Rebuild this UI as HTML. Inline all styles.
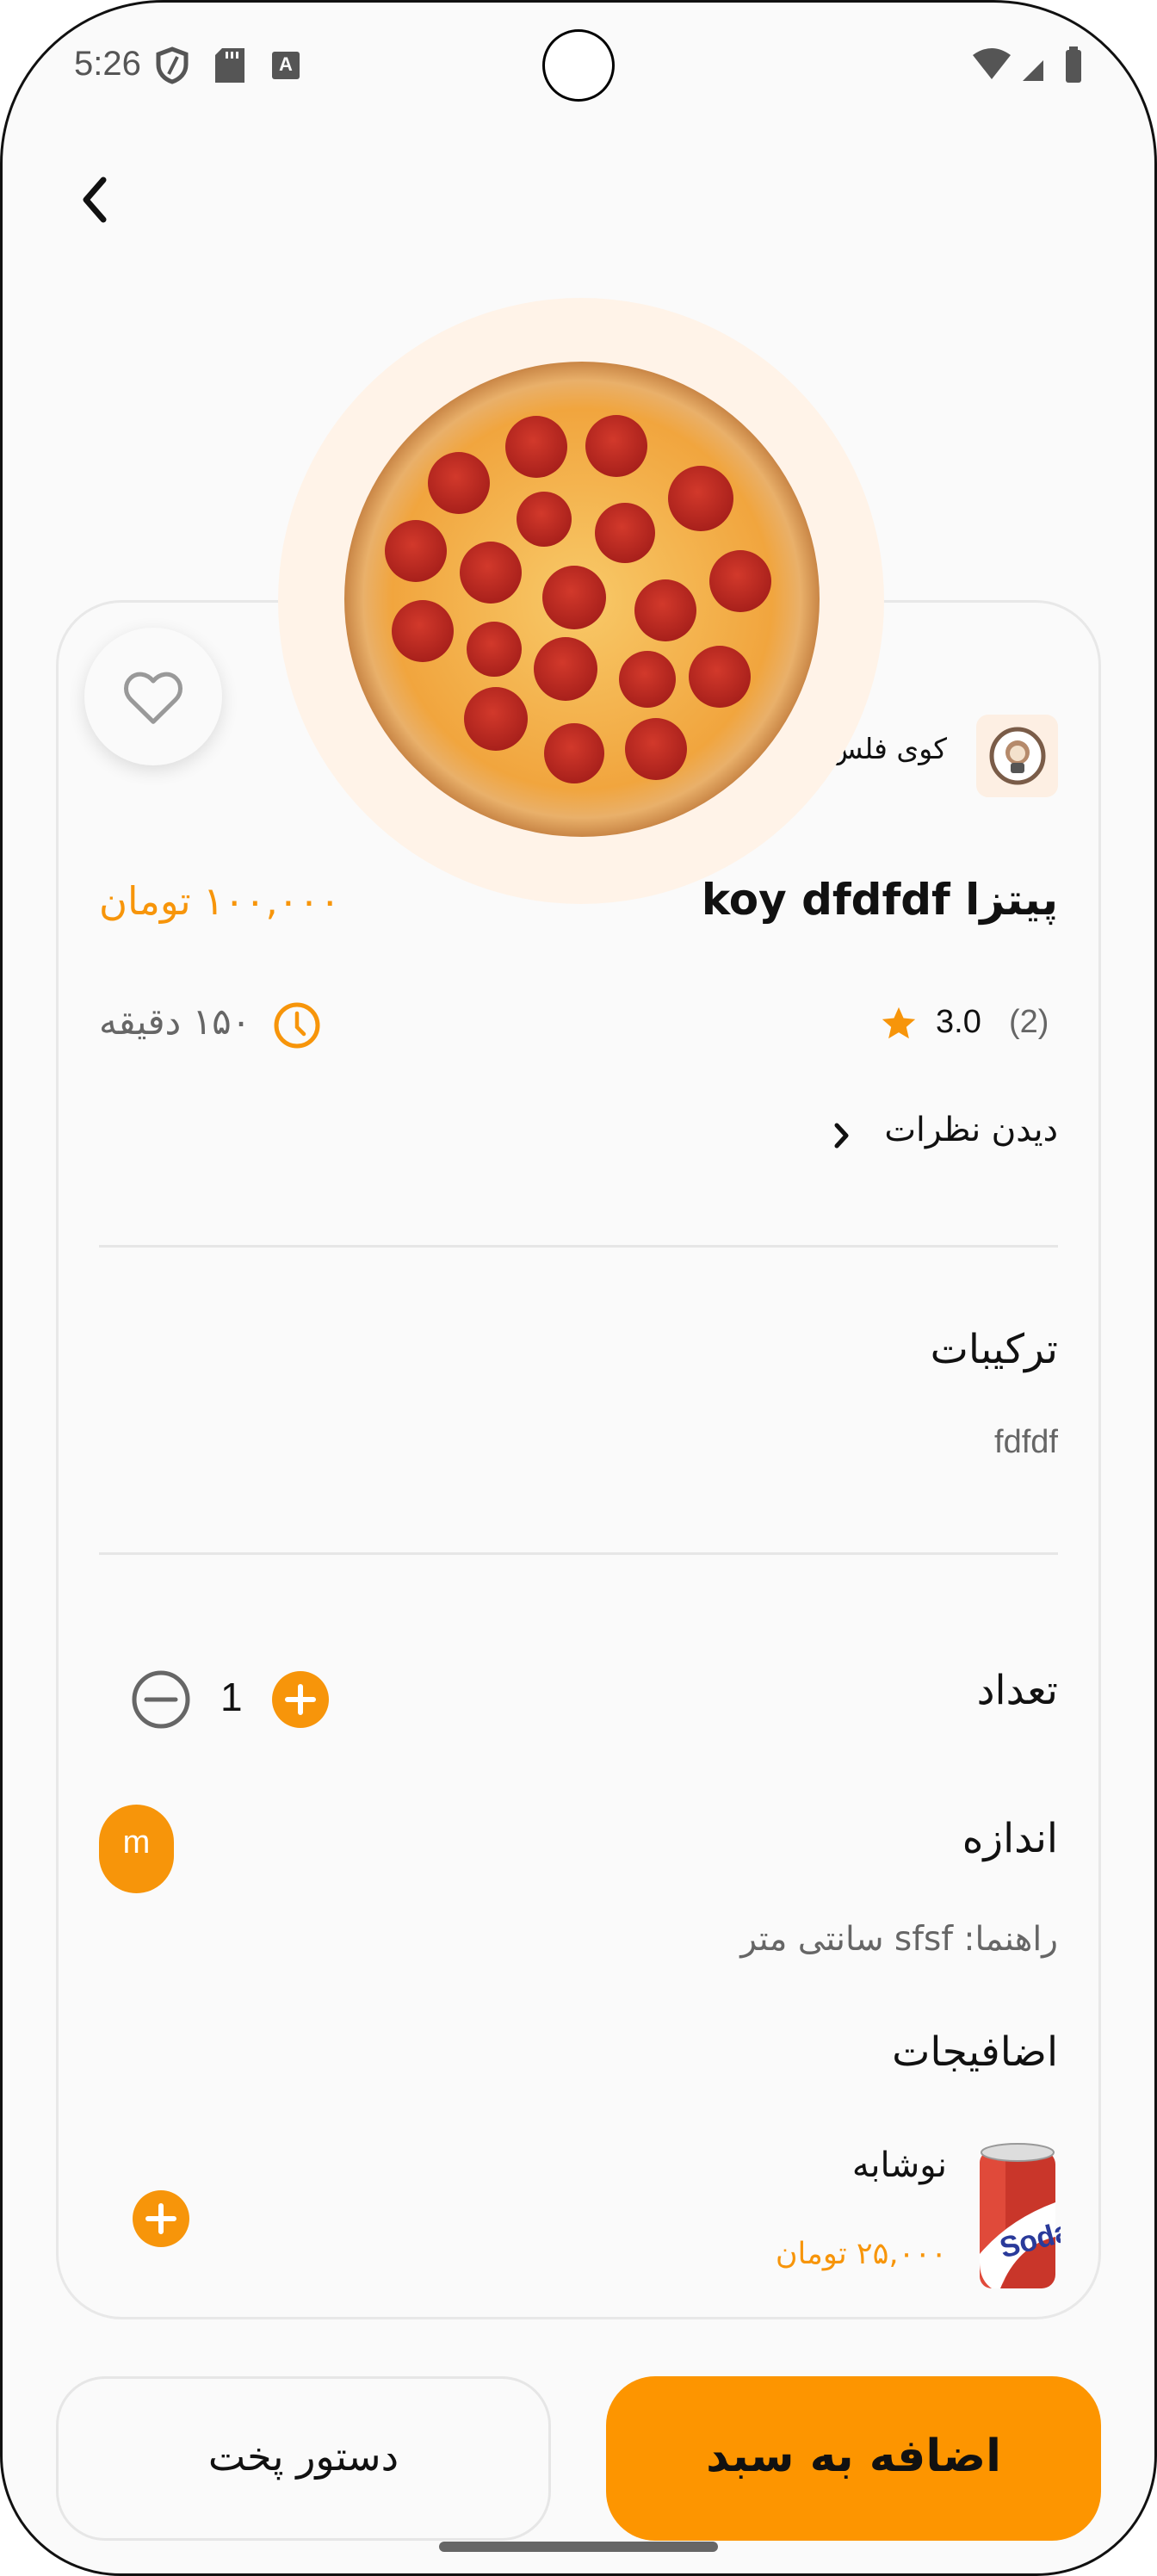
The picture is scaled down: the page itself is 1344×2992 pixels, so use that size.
<!DOCTYPE html>
<html><head><meta charset="utf-8"><style>
*{margin:0;padding:0;box-sizing:border-box}
body{width:1344px;height:2992px;background:#fff;position:relative;overflow:hidden;font-family:"DejaVu Sans","Liberation Sans",sans-serif;color:#111}
.screen{position:absolute;left:0;top:0;width:1344px;height:2992px;background:#fafafa;border:3px solid #111;border-radius:190px 190px 140px 140px}
.a{position:absolute;white-space:nowrap}
.r{direction:rtl}
</style></head><body>
<div class="screen"></div>
<!-- status bar -->
<div class="a" style="left:86px;top:52px;font-size:40px;color:#555;font-family:'Liberation Sans',sans-serif">5:26</div>
<svg class="a" style="left:180px;top:54px" width="40" height="44" viewBox="0 0 40 44"><path d="M20 3 L36 9 V21 C36 31 29 38 20 41 C11 38 4 31 4 21 V9 Z" fill="none" stroke="#555" stroke-width="5"/><path d="M26 12 L16 32" stroke="#555" stroke-width="4"/></svg>
<svg class="a" style="left:250px;top:56px" width="34" height="40"><path d="M8 0 H34 V40 H0 V8 Z" fill="#555"/><rect x="12" y="4" width="3" height="8" fill="#fafafa"/><rect x="18" y="4" width="3" height="8" fill="#fafafa"/><rect x="24" y="4" width="3" height="8" fill="#fafafa"/></svg>
<div class="a" style="left:316px;top:60px;width:32px;height:32px;background:#555;border-radius:3px;color:#fafafa;font-size:22px;font-weight:bold;text-align:center;line-height:30px;font-family:'Liberation Sans',sans-serif">A</div>
<div class="a" style="left:630px;top:34px;width:84px;height:84px;border:3px solid #000;border-radius:50%;background:#fff"></div>
<svg class="a" style="left:1128px;top:54px" width="140" height="44"><path d="M2 10 Q24 -6 46 10 L24 38 Z" fill="#555"/><path d="M60 40 L84 16 V40 Z" fill="#555"/><rect x="110" y="4" width="18" height="38" rx="3" fill="#555"/><rect x="114" y="0" width="10" height="6" fill="#555"/></svg>
<!-- back -->
<svg class="a" style="left:90px;top:203px" width="40" height="60"><path d="M30 6 L10 29 L30 52" fill="none" stroke="#111" stroke-width="7" stroke-linecap="round" stroke-linejoin="round"/></svg>
<!-- card -->
<div class="a" style="left:65px;top:697px;width:1214px;height:1997px;border:3px solid #e8e8e8;border-radius:76px;background:#fafafa"></div>
<div class="a r" style="right:244px;top:850px;font-size:33px;color:#111">کوی فلس</div>
<!-- peach circle + pizza -->
<svg class="a" style="left:0;top:0" width="1344" height="1100">
<defs>
<radialGradient id="pz" cx="50%" cy="50%" r="50%"><stop offset="0" stop-color="#f8c968"/><stop offset="0.8" stop-color="#f1a53e"/><stop offset="0.92" stop-color="#e9b06a"/><stop offset="1" stop-color="#c98646"/></radialGradient>
<radialGradient id="pp" cx="45%" cy="40%" r="60%"><stop offset="0" stop-color="#d2392b"/><stop offset="1" stop-color="#a8201b"/></radialGradient>
</defs>
<circle cx="675" cy="698" r="352" fill="#fff3e8"/>
<circle cx="676" cy="696" r="276" fill="url(#pz)"/>
<g fill="url(#pp)">
<circle cx="623" cy="519" r="36"/><circle cx="716" cy="518" r="36"/><circle cx="533" cy="561" r="36"/><circle cx="814" cy="579" r="38"/><circle cx="483" cy="640" r="36"/><circle cx="632" cy="603" r="32"/><circle cx="726" cy="619" r="35"/><circle cx="570" cy="665" r="36"/><circle cx="860" cy="675" r="36"/><circle cx="667" cy="694" r="37"/><circle cx="773" cy="709" r="36"/><circle cx="491" cy="733" r="36"/><circle cx="574" cy="754" r="32"/><circle cx="657" cy="777" r="37"/><circle cx="752" cy="789" r="33"/><circle cx="836" cy="786" r="36"/><circle cx="576" cy="835" r="37"/><circle cx="667" cy="875" r="35"/><circle cx="762" cy="870" r="36"/>
</g>
</svg>
<!-- heart -->
<div class="a" style="left:98px;top:729px;width:160px;height:160px;border-radius:50%;background:#fafafa;box-shadow:0 6px 20px rgba(0,0,0,0.12)"></div>
<svg class="a" style="left:138px;top:770px" width="80" height="80" viewBox="0 0 24 24"><path d="M12 20.5 L4.2 12.8 C2 10.6 2 7.2 4.2 5.2 C6.3 3.3 9.6 3.5 12 6.3 C14.4 3.5 17.7 3.3 19.8 5.2 C22 7.2 22 10.6 19.8 12.8 Z" fill="none" stroke="#999" stroke-width="1.5" stroke-linejoin="round"/></svg>
<!-- store -->
<div class="a" style="left:1134px;top:830px;width:95px;height:96px;border-radius:14px;background:#fdefe3"></div>
<svg class="a" style="left:1148px;top:844px" width="68" height="68"><ellipse cx="34" cy="34" rx="30" ry="31" fill="#fff" stroke="#7a5c48" stroke-width="5"/><circle cx="34" cy="30" r="14" fill="#b58a6b"/><circle cx="34" cy="31" r="9" fill="#f3e1cc"/><rect x="26" y="42" width="16" height="12" rx="3" fill="#555"/></svg>
<!-- title -->
<div class="a r" style="right:115px;top:1016px;font-size:50px;font-weight:bold;color:#111">پیتزا koy dfdfdf</div>
<div class="a r" style="left:115px;top:1020px;font-size:45px;color:#f7950a">۱۰۰,۰۰۰ تومان</div>
<!-- rating -->
<div class="a" style="left:1172px;top:1166px;font-size:38px;color:#666;font-family:'Liberation Sans',sans-serif">(2)</div>
<div class="a" style="left:1087px;top:1166px;font-size:38px;color:#111;font-family:'Liberation Sans',sans-serif">3.0</div>
<svg class="a" style="left:1020px;top:1166px" width="48" height="46" viewBox="0 0 24 24"><path d="M12 2 L14.9 8.6 L22 9.3 L16.6 14 L18.2 21 L12 17.3 L5.8 21 L7.4 14 L2 9.3 L9.1 8.6 Z" fill="#f7950a"/></svg>
<svg class="a" style="left:316px;top:1162px" width="58" height="58"><circle cx="29" cy="29" r="24" fill="none" stroke="#f7950a" stroke-width="5"/><path d="M29 15 V31 L37 39" fill="none" stroke="#f7950a" stroke-width="4.5" stroke-linecap="round"/></svg>
<div class="a r" style="left:115px;top:1162px;font-size:42px;color:#666">۱۵۰ دقیقه</div>
<div class="a r" style="right:115px;top:1290px;font-size:39px;color:#111">دیدن نظرات</div>
<svg class="a" style="left:966px;top:1302px" width="24" height="34"><path d="M6 5 L17 17 L6 29" fill="none" stroke="#111" stroke-width="5" stroke-linecap="round" stroke-linejoin="round"/></svg>
<div class="a" style="left:115px;top:1446px;width:1114px;height:3px;background:#e6e6e6"></div>
<div class="a r" style="right:115px;top:1540px;font-size:47px;color:#111">ترکیبات</div>
<div class="a" style="right:115px;top:1654px;font-size:38px;color:#666;font-family:'Liberation Sans',sans-serif">fdfdf</div>
<div class="a" style="left:115px;top:1803px;width:1114px;height:3px;background:#e6e6e6"></div>
<!-- quantity -->
<div class="a r" style="right:115px;top:1936px;font-size:47px;color:#111">تعداد</div>
<svg class="a" style="left:150px;top:1937px" width="74" height="74"><circle cx="37" cy="37" r="31" fill="none" stroke="#666" stroke-width="5"/><path d="M20 37 H54" stroke="#666" stroke-width="5" stroke-linecap="round"/></svg>
<div class="a" style="left:256px;top:1944px;font-size:46px;color:#111;font-family:'Liberation Sans',sans-serif">1</div>
<svg class="a" style="left:315px;top:1940px" width="68" height="68"><circle cx="34" cy="34" r="33" fill="#f7950a"/><path d="M34 19 V49 M19 34 H49" stroke="#fff" stroke-width="6" stroke-linecap="round"/></svg>
<!-- size -->
<div class="a r" style="right:115px;top:2108px;font-size:47px;color:#111">اندازه</div>
<div class="a" style="left:115px;top:2096px;width:87px;height:103px;border-radius:44px;background:#f7950a;color:#fff;font-size:38px;text-align:center;line-height:88px;font-family:'Liberation Sans',sans-serif">m</div>
<div class="a r" style="right:115px;top:2230px;font-size:39px;color:#666">راهنما: sfsf سانتی متر</div>
<div class="a r" style="right:115px;top:2356px;font-size:47px;color:#111">اضافیجات</div>
<!-- soda -->
<svg class="a" style="left:1132px;top:2488px" width="100" height="176"><rect x="6" y="10" width="88" height="160" rx="16" fill="#c9362a"/><rect x="6" y="10" width="30" height="160" rx="14" fill="#e04a3a"/><ellipse cx="50" cy="12" rx="42" ry="10" fill="#ddd" stroke="#999" stroke-width="2"/><path d="M6 130 Q40 90 94 70 V110 Q50 120 30 170 H20 Q6 160 6 140 Z" fill="#fff"/><text x="30" y="130" font-family="Liberation Sans" font-weight="bold" font-size="34" fill="#2a3a9a" transform="rotate(-15 50 120)">Soda</text></svg>
<div class="a r" style="right:244px;top:2492px;font-size:40px;color:#111">نوشابه</div>
<div class="a r" style="right:244px;top:2598px;font-size:35px;color:#f7950a">۲۵,۰۰۰ تومان</div>
<svg class="a" style="left:153px;top:2543px" width="68" height="68"><circle cx="34" cy="34" r="33" fill="#f7950a"/><path d="M34 19 V49 M19 34 H49" stroke="#fff" stroke-width="6" stroke-linecap="round"/></svg>
<!-- buttons -->
<div class="a" style="left:65px;top:2760px;width:575px;height:191px;border:3px solid #e6e6e6;border-radius:57px;background:#fafafa;text-align:center;line-height:180px;font-size:46px;color:#111" dir="rtl">دستور پخت</div>
<div class="a" style="left:704px;top:2760px;width:575px;height:191px;border-radius:57px;background:#fd9500;text-align:center;line-height:186px;font-size:52px;font-weight:bold;color:#111" dir="rtl">اضافه به سبد</div>
<div class="a" style="left:510px;top:2952px;width:324px;height:12px;border-radius:6px;background:#666"></div>
</body></html>
